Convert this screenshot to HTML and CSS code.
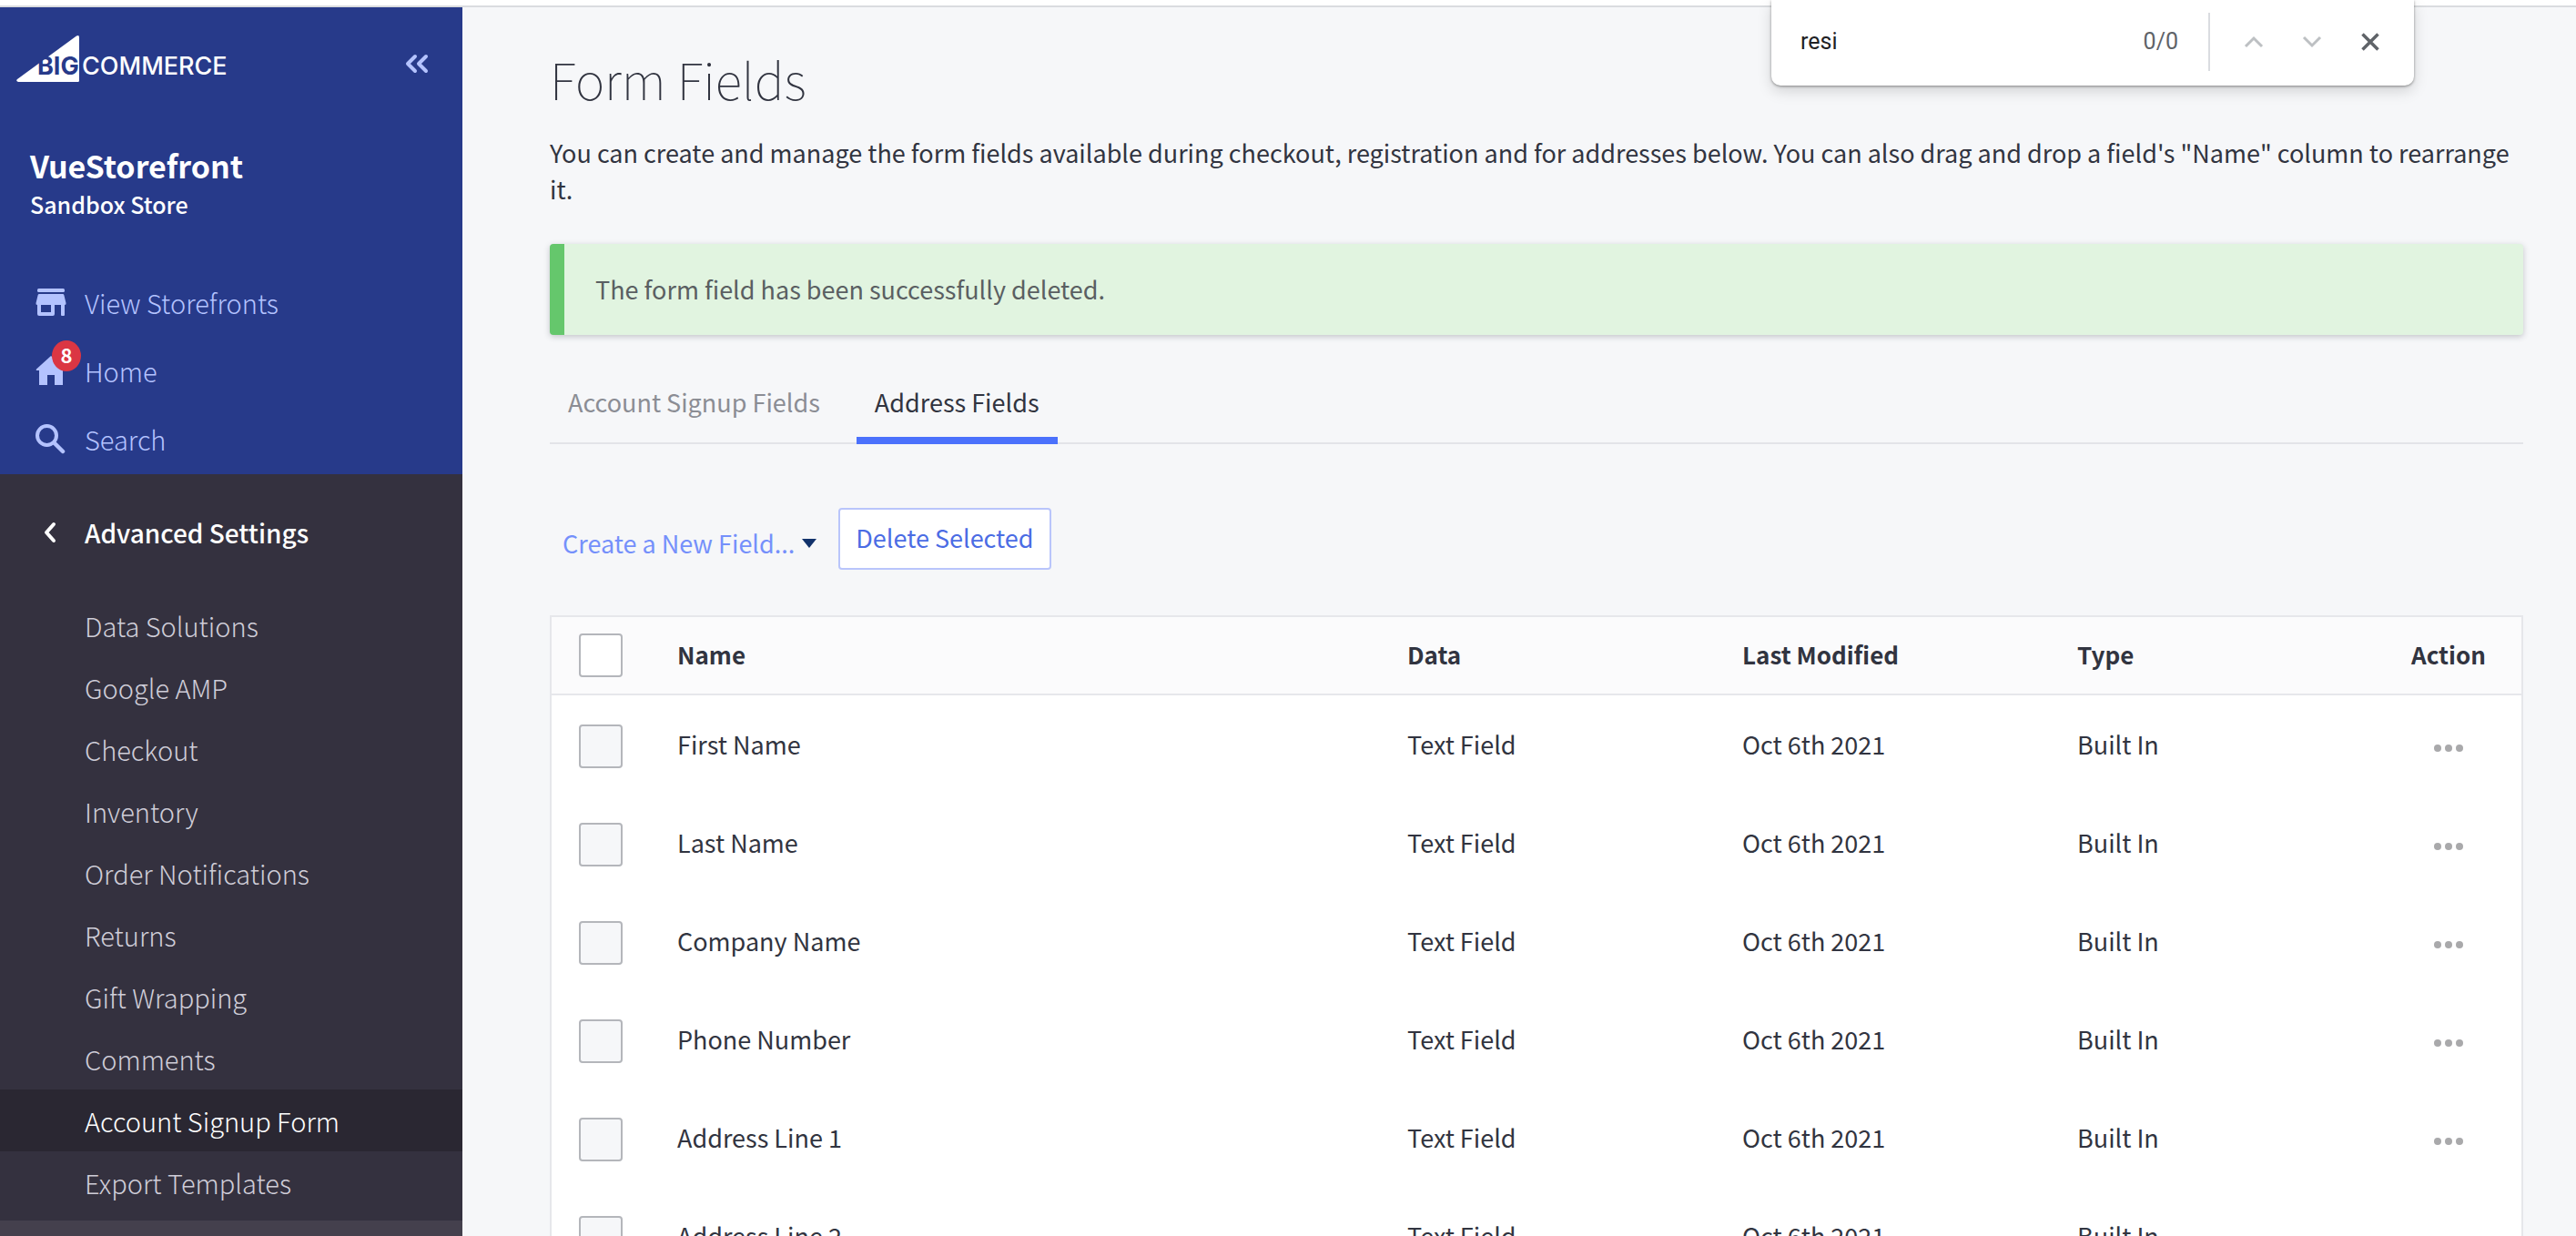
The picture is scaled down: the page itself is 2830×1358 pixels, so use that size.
FILE: index.html
```html
<!DOCTYPE html>
<html lang="en">
<head>
<meta charset="utf-8">
<title>Form Fields</title>
<link rel="stylesheet" href="styles.css">
</head>
<body>
<div class="topbar"></div>
<div class="shell">
  <aside class="sidebar">
    <div class="sidebar-head">
      <div class="brand-row">
        <a class="brand" href="#">
          <svg class="brand-mark" width="70" height="54" viewBox="0 0 70 54" aria-hidden="true"><path d="M66 1.500 Q69 0 69 3V50.500Q69 52 67.500 52H2Q-1 51 1 49Z" fill="#fff"/></svg>
          <span class="brand-text"><span class="brand-big">BIG</span><span>COMMERCE</span></span>
        </a>
        <button class="icon-button collapse" type="button" aria-label="Collapse menu">
          <svg width="26" height="22" viewBox="0 0 26 22" fill="none" stroke="#b4c3ff" stroke-width="4" stroke-linecap="round" stroke-linejoin="round"><path d="M11 3 3 11l8 8M23 3l-8 8 8 8"/></svg>
        </button>
      </div>
      <div class="store">
        <strong class="store-name">VueStorefront</strong>
        <span class="store-plan">Sandbox Store</span>
      </div>
      <nav class="main-nav">
        <a href="#"><span class="nav-icon"><svg width="34" height="32" viewBox="0 0 34 32" fill="#b4c3ff"><rect x="2" y="1" width="30" height="4" rx="1.500"/><path fill-rule="evenodd" d="M4 7H30Q31 7 31.300 8L33.500 17Q34 19 32 19V30Q32 31 31 31H29Q28 31 28 30V19H21V29Q21 31 19 31H4Q2 31 2 29V19Q0 19 .5 17L2.700 8Q3 7 4 7ZM6 19V27H17V19Z"/></svg></span>View Storefronts</a>
        <a href="#"><span class="nav-icon"><svg width="34" height="34" viewBox="0 0 34 34" fill="#b4c3ff"><path d="M17 1 33 15.500Q34 17 32 17H30V33H21V22H13V33H4V17H1.500Q0 17 1 15.500Z"/></svg><span class="badge">8</span></span>Home</a>
        <a href="#"><span class="nav-icon"><svg width="34" height="34" viewBox="0 0 34 34" fill="none" stroke="#b4c3ff" stroke-width="4"><circle cx="12.500" cy="13.500" r="10.500"/><path d="M20.500 21.500 30 31" stroke-width="4.500" stroke-linecap="round"/></svg></span>Search</a>
      </nav>
    </div>
    <nav class="sub-nav">
      <a class="sub-title" href="#"><span class="nav-icon back"><svg width="16" height="24" viewBox="0 0 16 24" fill="none" stroke="#fff" stroke-width="4" stroke-linecap="round" stroke-linejoin="round"><path d="M12 3 4 12l8 9"/></svg></span>Advanced Settings</a>
      <ul>
        <li><a href="#">Data Solutions</a></li>
        <li><a href="#">Google AMP</a></li>
        <li><a href="#">Checkout</a></li>
        <li><a href="#">Inventory</a></li>
        <li><a href="#">Order Notifications</a></li>
        <li><a href="#">Returns</a></li>
        <li><a href="#">Gift Wrapping</a></li>
        <li><a href="#">Comments</a></li>
        <li><a class="current" href="#">Account Signup Form</a></li>
        <li><a href="#">Export Templates</a></li>
      </ul>
    </nav>
    <div class="sidebar-foot"></div>
  </aside>

  <main class="content">
    <h1>Form Fields</h1>
    <p class="intro">You can create and manage the form fields available during checkout, registration and for addresses below. You can also drag and drop a field's "Name" column to rearrange it.</p>
    <div class="alert" role="status">The form field has been successfully deleted.</div>
    <nav class="tabs">
      <a href="#">Account Signup Fields</a>
      <a class="active" href="#">Address Fields</a>
    </nav>
    <div class="toolbar">
      <button class="create" type="button">Create a New Field...<span class="caret"></span></button>
      <button class="delete" type="button">Delete Selected</button>
    </div>
    <table class="fields">
      <colgroup><col class="col-check"><col><col class="col-data"><col class="col-date"><col class="col-type"><col class="col-action"></colgroup>
      <thead>
        <tr><th><input type="checkbox" aria-label="Select all"></th><th>Name</th><th>Data</th><th>Last Modified</th><th>Type</th><th class="action">Action</th></tr>
      </thead>
      <tbody>
        <tr><td><input type="checkbox" aria-label="First Name"></td><td>First Name</td><td>Text Field</td><td>Oct 6th 2021</td><td>Built In</td><td class="action"><button class="icon-button more" type="button" aria-label="Actions"><i></i><i></i><i></i></button></td></tr>
        <tr><td><input type="checkbox" aria-label="Last Name"></td><td>Last Name</td><td>Text Field</td><td>Oct 6th 2021</td><td>Built In</td><td class="action"><button class="icon-button more" type="button" aria-label="Actions"><i></i><i></i><i></i></button></td></tr>
        <tr><td><input type="checkbox" aria-label="Company Name"></td><td>Company Name</td><td>Text Field</td><td>Oct 6th 2021</td><td>Built In</td><td class="action"><button class="icon-button more" type="button" aria-label="Actions"><i></i><i></i><i></i></button></td></tr>
        <tr><td><input type="checkbox" aria-label="Phone Number"></td><td>Phone Number</td><td>Text Field</td><td>Oct 6th 2021</td><td>Built In</td><td class="action"><button class="icon-button more" type="button" aria-label="Actions"><i></i><i></i><i></i></button></td></tr>
        <tr><td><input type="checkbox" aria-label="Address Line 1"></td><td>Address Line 1</td><td>Text Field</td><td>Oct 6th 2021</td><td>Built In</td><td class="action"><button class="icon-button more" type="button" aria-label="Actions"><i></i><i></i><i></i></button></td></tr>
        <tr><td><input type="checkbox" aria-label="Address Line 2"></td><td>Address Line 2</td><td>Text Field</td><td>Oct 6th 2021</td><td>Built In</td><td class="action"><button class="icon-button more" type="button" aria-label="Actions"><i></i><i></i><i></i></button></td></tr>
      </tbody>
    </table>
  </main>
</div>

<div class="find-bar" role="search">
  <input type="text" value="resi" aria-label="Find in page">
  <span class="find-count">0/0</span>
  <span class="find-divider"></span>
  <button class="icon-button" type="button" aria-label="Previous"><svg width="24" height="24" viewBox="0 0 24 24" fill="none" stroke="#bdc0c3" stroke-width="3"><path d="M3 17l9-9 9 9"/></svg></button>
  <button class="icon-button" type="button" aria-label="Next"><svg width="24" height="24" viewBox="0 0 24 24" fill="none" stroke="#bdc0c3" stroke-width="3"><path d="M3 7l9 9 9-9"/></svg></button>
  <button class="icon-button" type="button" aria-label="Close"><svg width="24" height="24" viewBox="0 0 24 24" fill="none" stroke="#5f6368" stroke-width="3.500"><path d="M3.500 3.500l17 17M20.500 3.500l-17 17"/></svg></button>
</div>
</body>
</html>
```
FILE: styles.css
```css
* {
  box-sizing: border-box;
}

body {
  margin: 0;
  height: 100vh;
  display: flex;
  flex-direction: column;
  overflow: hidden;
  background: #f6f7f9;
  color: #313440;
  font: 400 27px/40px "Noto Sans CJK JP", "Noto Sans", sans-serif;
}

a {
  color: inherit;
  text-decoration: none;
}

button,
input {
  margin: 0;
  font: inherit;
}

svg {
  display: block;
}

.icon-button {
  display: flex;
  align-items: center;
  justify-content: center;
  padding: 0;
  border: 0;
  background: none;
}

.topbar {
  flex: none;
  height: 8px;
  border-bottom: 2px solid #dadcdf;
  background: #fff;
}

.shell {
  flex: 1;
  min-height: 0;
  display: flex;
}

/* Sidebar */

.sidebar {
  flex: none;
  width: 508px;
  display: flex;
  flex-direction: column;
  background: #34313f;
  font-size: 29px;
  overflow: hidden;
}

.sidebar-head {
  flex: none;
  padding: 30px 0 2px;
  background: #273a8a;
}

.brand-row {
  display: flex;
  align-items: flex-start;
  justify-content: space-between;
  padding: 0 37px 0 18px;
}

.brand {
  position: relative;
  display: block;
  width: 240px;
  height: 54px;
}

.brand-text {
  position: absolute;
  left: 23px;
  top: 18px;
  display: flex;
  color: #fff;
  font: 500 27px/34px Inter, sans-serif;
}

.brand-big {
  width: 49px;
  color: #273a8a;
  font-weight: 700;
}

.collapse {
  height: 64px;
}

.store {
  display: flex;
  flex-direction: column;
  padding: 58px 33px 0;
  color: #fff;
}

.store-name {
  font-size: 34px;
  line-height: 44px;
}

.store-plan {
  font-size: 25px;
  font-weight: 500;
}

.main-nav {
  padding-top: 50px;
}

.main-nav a {
  display: flex;
  align-items: center;
  height: 75px;
  color: #b4c3ff;
  font-weight: 300;
}

.nav-icon {
  position: relative;
  flex: none;
  width: 93px;
  padding-left: 39px;
}

.badge {
  position: absolute;
  left: 57px;
  top: -16px;
  width: 32px;
  height: 34px;
  border-radius: 50%;
  background: #db3643;
  color: #fff;
  font-size: 22px;
  font-weight: 700;
  line-height: 30px;
  text-align: center;
}

.sub-nav ul {
  margin: 0;
  padding: 0;
  list-style: none;
}

.sub-title {
  display: flex;
  align-items: center;
  margin: 32px 0 36px;
  height: 64px;
  color: #fff;
  font-size: 28px;
  font-weight: 500;
}

.back {
  padding-left: 47px;
}

.sub-nav li a {
  display: block;
  padding: 14px 0 14px 93px;
  color: #cfcdd8;
  font-weight: 300;
}

.sub-nav li .current {
  background: #2a2732;
  color: #fff;
}

.sidebar-foot {
  flex: 1;
  margin-top: 8px;
  background: #44404d;
}

/* Content */

.content {
  flex: 1;
  min-width: 0;
  padding: 38px 58px 0 96px;
  overflow: hidden;
}

h1 {
  margin: 0;
  font-size: 55px;
  font-weight: 100;
  line-height: 80px;
}

.intro {
  margin: 22px 0 40px;
}

.alert {
  padding: 30px 34px 30px;
  border-left: 16px solid #65c76c;
  border-radius: 4px;
  background: #e1f4e0;
  color: #5a5f62;
  box-shadow: 0 2px 6px rgba(49, 52, 64, .25);
}

.tabs {
  display: flex;
  gap: 20px;
  margin-top: 32px;
  border-bottom: 2px solid #e3e4e8;
  color: #8b8d94;
}

.tabs a {
  margin-bottom: -2px;
  padding: 22px 20px 18px;
  border-bottom: 8px solid transparent;
}

.tabs .active {
  border-color: #4b71fc;
  color: #313440;
}

.toolbar {
  display: flex;
  align-items: flex-start;
  gap: 24px;
  padding: 70px 0 50px 14px;
}

.create,
.delete {
  display: flex;
  align-items: center;
  height: 68px;
  padding: 0;
  border: 0;
  background: none;
  color: #7590fb;
}

.create {
  gap: 8px;
  padding-top: 10px;
}

.caret {
  border: 8px solid transparent;
  border-top: 10px solid #12326b;
  border-bottom: 0;
}

.delete {
  padding: 0 17px 2px;
  border: 2px solid #b9c5fb;
  border-radius: 4px;
  background: #fff;
  color: #4b6ce4;
}

.fields {
  width: 100%;
  table-layout: fixed;
  border-collapse: separate;
  border-spacing: 0;
  border: 2px solid #e6e7eb;
  background: #fff;
}

.col-check {
  width: 138px;
}

.col-data,
.col-date {
  width: 368px;
}

.col-type {
  width: 328px;
}

.col-action {
  width: 160px;
}

.fields th {
  height: 86px;
  padding: 0 0 2px;
  border-bottom: 2px solid #e6e7eb;
  background: #fbfbfc;
  font-size: 26px;
  font-weight: 700;
  text-align: left;
}

.fields td {
  height: 108px;
  padding: 0;
}

.fields th:first-child,
.fields td:first-child {
  padding: 4px 0 0 30px;
}

.fields th:first-child {
  padding-top: 0;
}

.fields .action {
  text-align: center;
}

.fields input {
  display: block;
  appearance: none;
  width: 48px;
  height: 48px;
  border: 2px solid #b4b6bb;
  border-radius: 4px;
  background: #f6f7f9;
}

.fields th input {
  background: #fff;
}

.more {
  gap: 4px;
  width: 100%;
  height: 40px;
  padding-top: 8px;
}

.more i {
  width: 8px;
  height: 8px;
  border-radius: 50%;
  background: #a9a9ab;
}

/* Browser find bar, floating over the page */

.find-bar {
  position: absolute;
  top: 0;
  right: 178px;
  display: flex;
  align-items: center;
  width: 706px;
  height: 94px;
  padding: 0 16px 2px 32px;
  border-radius: 0 0 10px 10px;
  background: #fff;
  box-shadow: 0 1px 3px rgba(0, 0, 0, .4), 0 6px 16px rgba(0, 0, 0, .15);
  color: #5f6368;
  font: 400 25px/32px Roboto, sans-serif;
}

.find-bar input {
  flex: 1;
  min-width: 0;
  padding: 0;
  border: 0;
  color: #202124;
}

.find-divider {
  width: 2px;
  height: 64px;
  margin: 0 16px 0 33px;
  background: #dadce0;
}

.find-bar .icon-button {
  width: 64px;
  height: 64px;
}
```
